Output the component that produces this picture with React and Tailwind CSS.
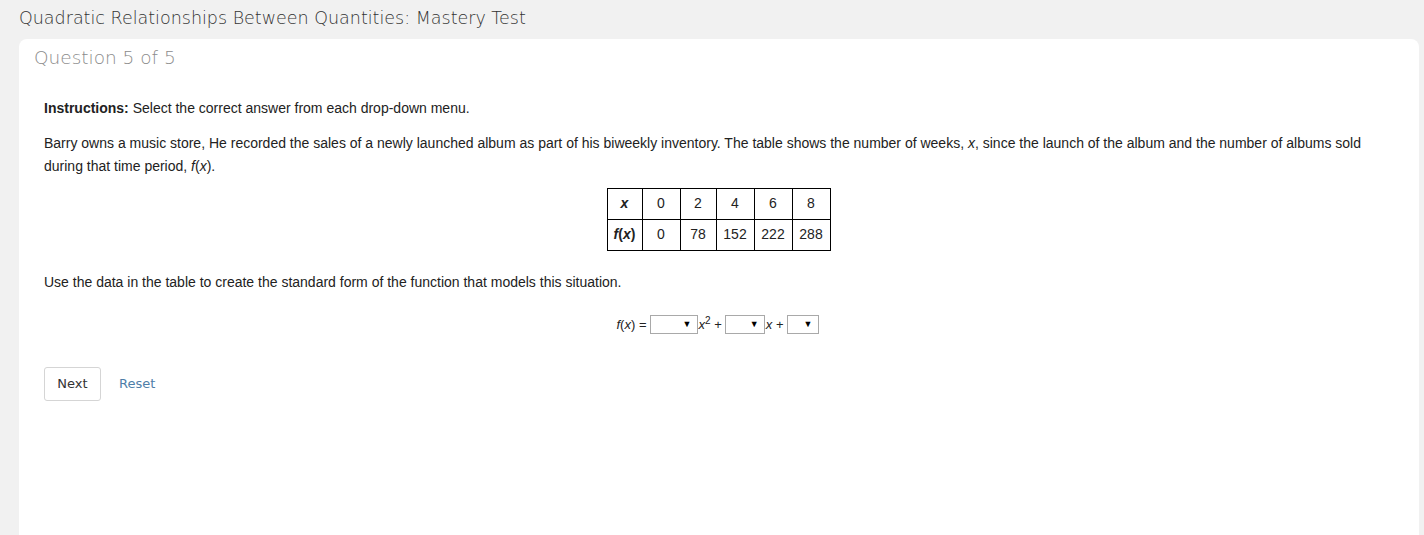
import React, { useState } from 'react';

const Select = ({ width, value, onChange }) => (
  <span className={`relative inline-flex items-center h-[19px] ${width} border border-[#a9a9a9] bg-white align-middle`}>
    <select
      value={value}
      onChange={(e) => onChange(e.target.value)}
      className="absolute inset-0 w-full h-full opacity-0 cursor-pointer"
    >
      <option value=""></option>
      <option value="-1">-1</option>
      <option value="40">40</option>
      <option value="0">0</option>
    </select>
    <span className="flex-1 px-1 text-[12px] text-[#222]">{value}</span>
    <span className="pr-[5px] text-[9px] leading-none text-black">▼</span>
  </span>
);

const App = () => {
  const [a, setA] = useState('');
  const [b, setB] = useState('');
  const [c, setC] = useState('');

  const xs = ['0', '2', '4', '6', '8'];
  const fx = ['0', '78', '152', '222', '288'];
  const widths = ['w-[38px]', 'w-[36px]', 'w-[38px]', 'w-[38px]', 'w-[38px]'];

  return (
    <div className="min-h-[535px] bg-[#f1f1f1] flex flex-col" style={{ fontFamily: 'Arial, "Liberation Sans", sans-serif' }}>
      <h1 className="pl-[19px] pt-[5px] h-[39px] text-[17.5px] text-[#333] font-light" style={{ fontFamily: '"DejaVu Sans", sans-serif' }}>
        Quadratic Relationships Between Quantities: Mastery Test
      </h1>

      <div className="flex-1 ml-[19px] mr-[5px] bg-white rounded-t-[8px]">
        <h2 className="pl-[15px] pt-[5px] text-[18.5px] text-[#8c8c8c] font-extralight" style={{ fontFamily: '"DejaVu Sans", sans-serif' }}>
          Question 5 of 5
        </h2>

        <div className="pl-[25px] pr-[40px] text-[14px] leading-[21px] text-[#222]">
          <p className="mt-[26px]">
            <b>Instructions:</b> Select the correct answer from each drop-down menu.
          </p>

          <p className="mt-[13px] leading-[23px]">
            Barry owns a music store, He recorded the sales of a newly launched album as part of his biweekly inventory. The table shows the number of weeks, <i>x</i>, since the launch of the album and the number of albums sold during that time period, <i>f</i>(<i>x</i>).
          </p>

          <div className="flex justify-center mt-[10px] pl-[14px]">
            <table className="border-collapse text-[14px] text-[#222]">
              <tbody>
                <tr className="h-[31px]">
                  <td className="w-[35px] border border-black text-center font-bold italic">x</td>
                  {xs.map((v, i) => (
                    <td key={v} className={`${widths[i]} border border-black text-center`}>{v}</td>
                  ))}
                </tr>
                <tr className="h-[31px]">
                  <td className="border border-black text-center font-bold"><i>f</i>(<i>x</i>)</td>
                  {fx.map((v) => (
                    <td key={v} className="border border-black text-center">{v}</td>
                  ))}
                </tr>
              </tbody>
            </table>
          </div>

          <p className="mt-[21px]">
            Use the data in the table to create the standard form of the function that models this situation.
          </p>

          <div className="flex justify-center items-center mt-[21px] pl-[12px] text-[13px]">
            <span className="mr-[3px]"><i>f</i>(<i>x</i>) =</span>
            <Select width="w-[48px]" value={a} onChange={setA} />
            <span className="ml-[1px] mr-[3px]"><i>x</i><sup className="text-[10px]">2</sup> +</span>
            <Select width="w-[40px]" value={b} onChange={setB} />
            <span className="ml-[1px] mr-[3px]"><i>x</i> +</span>
            <Select width="w-[32px]" value={c} onChange={setC} />
          </div>

          <div className="flex items-center mt-[32px]" style={{ fontFamily: '"DejaVu Sans", sans-serif' }}>
            <button
              onClick={() => {}}
              className="h-[34px] w-[57px] border border-[#d5d5d5] rounded-[3px] text-[13px] text-[#333] bg-white"
            >
              Next
            </button>
            <button
              onClick={() => { setA(''); setB(''); setC(''); }}
              className="ml-[18px] text-[13px] text-[#4e7ea8]"
            >
              Reset
            </button>
          </div>
        </div>
      </div>
    </div>
  );
};

export default App;
